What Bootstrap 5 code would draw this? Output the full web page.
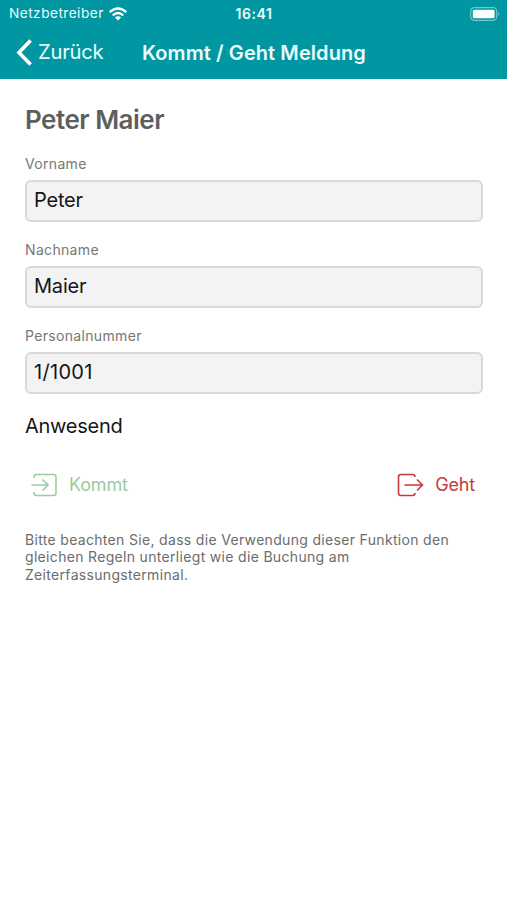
<!DOCTYPE html>
<html lang="de">
<head>
<meta charset="utf-8">
<meta name="viewport" content="width=device-width, initial-scale=1">
<title>Kommt / Geht Meldung</title>
<link href="https://cdn.jsdelivr.net/npm/bootstrap@5.3.0/dist/css/bootstrap.min.css" rel="stylesheet">
<style>
body{font-family:Inter,"Liberation Sans",sans-serif;color:#151515;background:#fff;overflow:hidden}
svg{display:block;flex:none}
.fit{white-space:nowrap}
.app-header{background:#0097a2;color:#e9fcfc;height:79px}
.status{height:27px;padding:0 6px 0 9px;font-size:13px;line-height:27px}
.carrier{letter-spacing:.45px;font-size:13.7px}
.clock{font-weight:600;letter-spacing:.6px;font-size:14px;padding-right:2px}
.titlebar{height:51px;padding-left:16px}
.back{font-size:20.2px;color:#e9fcfc;width:126px;gap:4px;letter-spacing:-.25px}
.title{font-size:20px;font-weight:600;letter-spacing:.08px}
.screen{padding:25px 24px 0 25px}
.person{font-size:26px;line-height:32px;font-weight:600;color:#5e5e5e;letter-spacing:-.5px}
.fields{padding-top:19px}
.field{height:86px}
.field label{font-size:14px;line-height:18px;color:#777;letter-spacing:.33px}
.field .form-control{height:42px;margin-top:7px;padding:0 7px 2px;font-size:20px;letter-spacing:-.2px;color:#151515;background:#f3f3f3;border:2px solid #d9d9d9;border-radius:6px}
#pn{letter-spacing:.3px}
.state{font-size:20px;line-height:26px;letter-spacing:-.25px}
.actions{padding-top:32px;height:92px}
.actions .act{font-size:18px;line-height:28px;gap:11px;padding:0 8px 0 6px;letter-spacing:-.15px}
.actions .act svg{margin-top:-1px}
.actions .in{color:#9ccb9f}
.actions .out{color:#c53a3a}
.hint{font-size:14px;line-height:17.4px;color:#6c6c6c;letter-spacing:.32px}
</style>
<script src="https://cdn.jsdelivr.net/npm/bootstrap@5.3.0/dist/js/bootstrap.bundle.min.js"></script>
</head>
<body>
<header class="app-header">
  <div class="status row g-0 align-items-center">
    <div class="col d-flex align-items-center gap-1"><span class="carrier fit">Netzbetreiber</span>
      <svg width="20" height="14" viewBox="0 0 20 14" fill="none" stroke="#fff" stroke-width="2.3"><path d="M1.7 5.2Q10-2.2 18.3 5.2M4.7 8.4Q10 3.7 15.3 8.4"/><path d="M10 13.6L6.9 10.6Q10 8 13.1 10.6Z" fill="#fff" stroke="none"/></svg>
    </div>
    <div class="col-auto clock">16:41</div>
    <div class="col d-flex justify-content-end">
      <svg width="31" height="14" viewBox="0 0 31 14"><rect x=".7" y=".7" width="26" height="12.6" rx="3.6" fill="none" stroke="#6fc6cc" stroke-width="1.2"/><rect x="2.8" y="2.7" width="21.8" height="8.6" rx="1.6" fill="#fff"/><path d="M28.3 4.8Q30.5 7 28.3 9.2Z" fill="#6fc6cc"/></svg>
    </div>
  </div>
  <nav class="titlebar d-flex align-items-center">
    <a class="back d-flex align-items-center text-decoration-none" href="#"><svg width="18" height="27" viewBox="0 0 18 27" fill="none" stroke="#fff" stroke-width="3.6"><path d="M14.6 1.6L3 13.5L14.6 25.4"/></svg><span class="fit">Zurück</span></a>
    <h1 class="title fit m-0">Kommt / Geht Meldung</h1>
  </nav>
</header>
<main class="screen">
  <h2 class="person m-0">Peter Maier</h2>
  <form class="fields">
    <div class="field"><label class="d-block" for="vn">Vorname</label><input class="form-control" id="vn" value="Peter" readonly></div>
    <div class="field"><label class="d-block" for="nn">Nachname</label><input class="form-control" id="nn" value="Maier" readonly></div>
    <div class="field"><label class="d-block" for="pn">Personalnummer</label><input class="form-control" id="pn" value="1/1001" readonly></div>
  </form>
  <div class="state">Anwesend</div>
  <div class="actions d-flex justify-content-between align-items-start">
    <button type="button" class="act in btn border-0 d-flex align-items-center"><svg width="27" height="24" viewBox="0 0 27 24" fill="none" stroke="currentColor" stroke-width="1.6"><path d="M3 5V4Q3 1.5 5.5 1.5H22.5Q25 1.5 25 4V20Q25 22.5 22.5 22.5H5.5Q3 22.5 3 20V19M.5 12H17M11.5 6.5L17 12L11.5 17.5"/></svg><span>Kommt</span></button>
    <button type="button" class="act out btn border-0 d-flex align-items-center"><svg width="27" height="24" viewBox="0 0 27 24" fill="none" stroke="currentColor" stroke-width="1.6"><path d="M18 4Q18 1.5 15.5 1.5H4Q1.5 1.5 1.5 4V20Q1.5 22.5 4 22.5H15.5Q18 22.5 18 20M7.5 12H25.5M20 6.5L25.5 12L20 17.5"/></svg><span>Geht</span></button>
  </div>
  <p class="hint m-0">Bitte beachten Sie, dass die Verwendung dieser Funktion den<br>gleichen Regeln unterliegt wie die Buchung am<br>Zeiterfassungsterminal.</p>
</main>
</body>
</html>
